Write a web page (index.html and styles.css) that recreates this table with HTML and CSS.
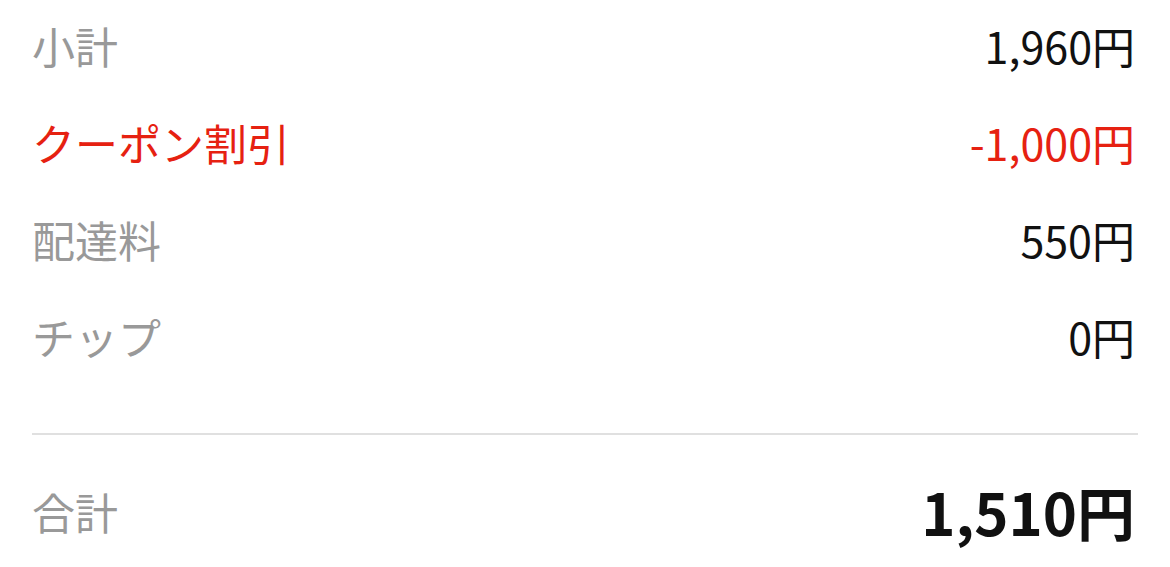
FILE: index.html
```html
<!DOCTYPE html>
<html lang="ja">
<head>
    <meta charset="UTF-8">
    <meta name="viewport" content="width=device-width, initial-scale=1.0">
    <title>注文金額</title>
    <link rel="stylesheet" href="styles.css">
</head>
<body>
    <div class="summary">
        <div class="row">
            <span class="label">小計</span>
            <span class="value">1,960円</span>
        </div>
        <div class="row discount">
            <span class="label">クーポン割引</span>
            <span class="value">-1,000円</span>
        </div>
        <div class="row">
            <span class="label">配達料</span>
            <span class="value">550円</span>
        </div>
        <div class="row">
            <span class="label">チップ</span>
            <span class="value">0円</span>
        </div>
        <div class="divider"></div>
        <div class="row total">
            <span class="label">合計</span>
            <span class="value">1,510円</span>
        </div>
    </div>
</body>
</html>
```

FILE: styles.css
```css
body {
    font-family: "Noto Sans CJK JP", "Noto Sans", sans-serif;
    margin: 0;
    padding: 0;
    background-color: #ffffff;
}
.summary {
    padding: 0 32px;
}
.row {
    display: flex;
    justify-content: space-between;
    align-items: center;
    box-sizing: border-box;
    height: 97px;
    padding-bottom: 6px;
    line-height: 1;
}
.label {
    font-size: 43px;
    color: #999999;
}
.value {
    font-size: 43px;
    color: #111111;
    margin-right: 3px;
}
.discount .label,
.discount .value {
    color: #e62111;
}
.divider {
    height: 2px;
    background-color: #e0e0e0;
    margin-top: 45px;
}
.total {
    height: 160px;
    padding-bottom: 8px;
}
.total .value {
    font-size: 58px;
    font-weight: bold;
}
```
